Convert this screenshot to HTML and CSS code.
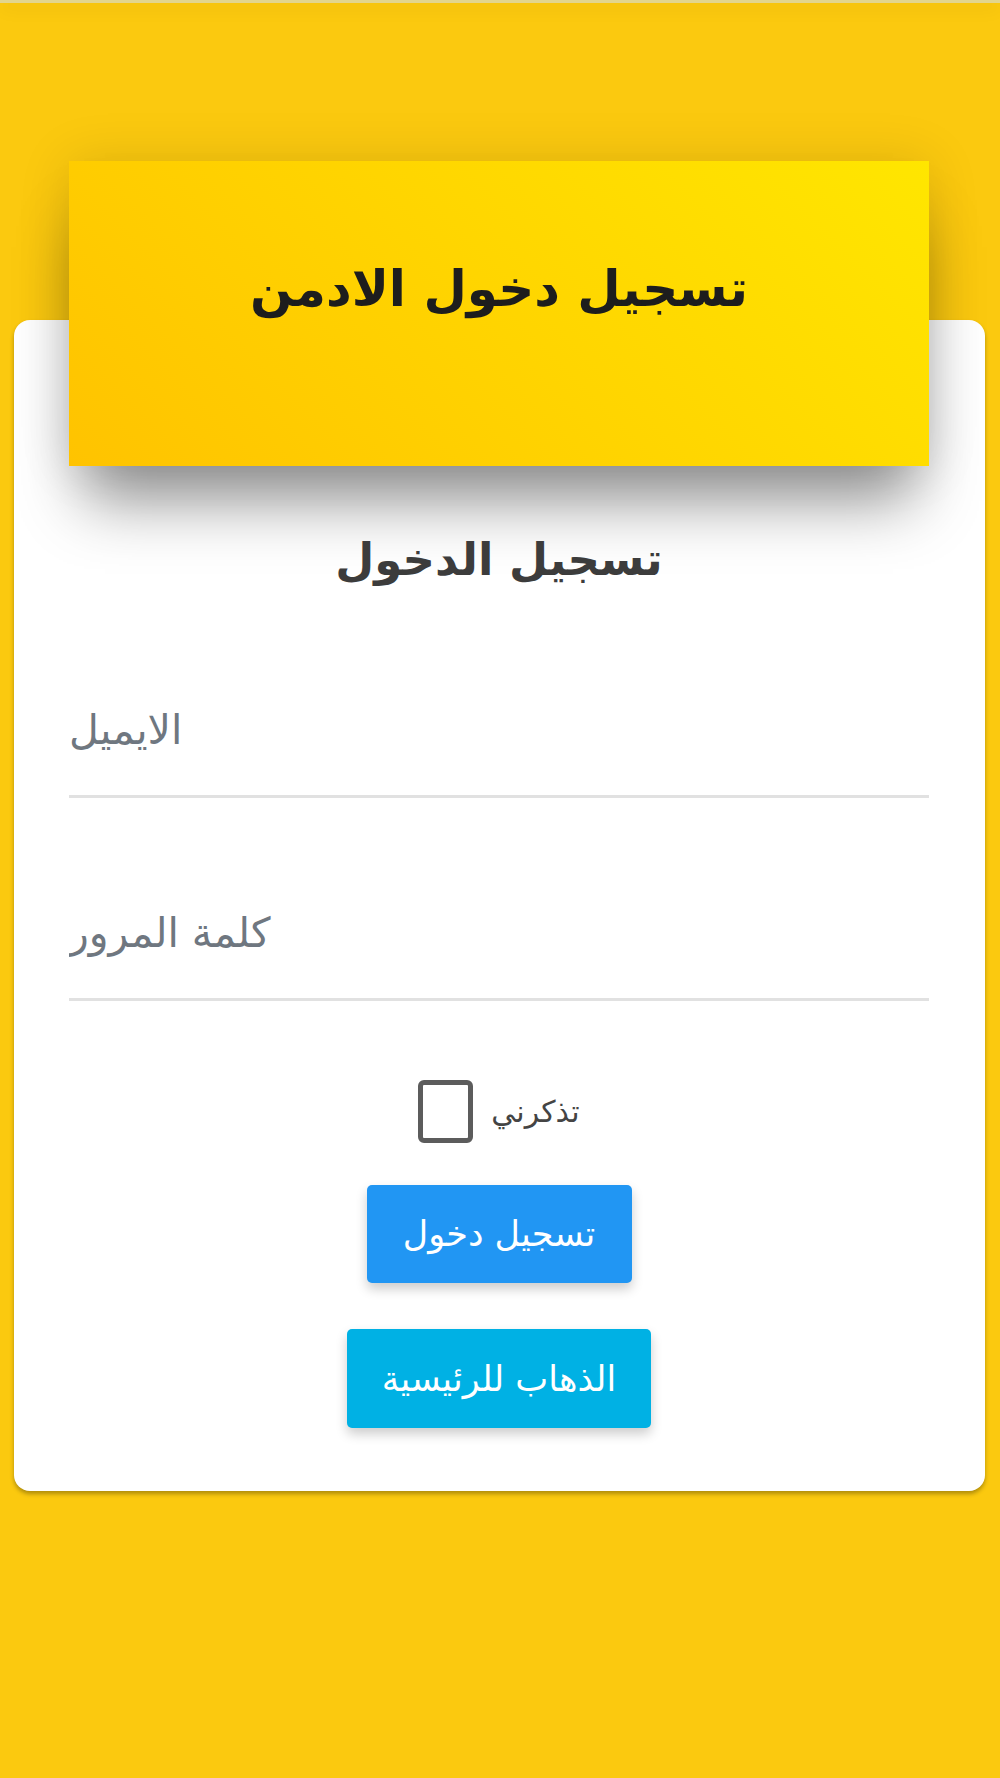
FILE: index.html
```html
<!DOCTYPE html>
<html lang="ar" dir="rtl">
<head>
    <meta charset="UTF-8">
    <meta name="viewport" content="width=device-width, initial-scale=1.0">
    <title>تسجيل دخول الادمن</title>
    <link rel="stylesheet" href="styles.css">
</head>
<body>
    <div class="topbar"></div>
    <div class="page">
        <div class="card">
            <div class="card-header">
                <h1>تسجيل دخول الادمن</h1>
            </div>
            <h2 class="card-title">تسجيل الدخول</h2>
            <form class="login-form" onsubmit="return false">
                <div class="field">
                    <input type="email" name="email" placeholder="الايميل">
                </div>
                <div class="field field-password">
                    <input type="password" name="password" placeholder="كلمة المرور">
                </div>
                <label class="remember">
                    <span>تذكرني</span>
                    <input type="checkbox" name="remember">
                </label>
                <button type="submit" class="btn btn-primary">تسجيل دخول</button>
                <button type="button" class="btn btn-info">الذهاب للرئيسية</button>
            </form>
        </div>
    </div>
</body>
</html>
```

FILE: styles.css
```css
body {
    margin: 0;
    min-height: 1778px;
    background: #fbc90f;
    font-family: 'DejaVu Sans', sans-serif;
    color: #3c3c3c;
}
.topbar {
    height: 3px;
    background: #e2d58e;
    box-shadow: 0 4px 18px rgba(0, 0, 0, 0.14);
    position: relative;
}
.page {
    padding: 317px 15px 0 14px;
}
.card {
    display: flow-root;
    background: #fff;
    border-radius: 16px;
    box-shadow: 0 3px 4px rgba(0, 0, 0, 0.3);
    padding: 0 56px 63px 55px;
}
.card-header {
    margin-top: -159px;
    height: 305px;
    box-sizing: border-box;
    padding-top: 98px;
    background: linear-gradient(45deg, #ffc300 0%, #ffe600 100%);
    box-shadow: 0 50px 60px -15px rgba(0, 0, 0, 0.42), 0 0 50px rgba(0, 0, 0, 0.12);
    text-align: center;
}
.card-header h1 {
    margin: 0;
    font-size: 50px;
    line-height: 60px;
    font-weight: bold;
    color: #1d1d1d;
}
.card-title {
    margin: 64px 0 0;
    font-size: 45px;
    line-height: 60px;
    font-weight: bold;
    text-align: center;
    color: #3c3c3c;
}
.login-form {
    display: flex;
    flex-direction: column;
    align-items: center;
}
.field {
    width: 100%;
    margin-top: 108px;
}
.field-password {
    margin-top: 103px;
}
.field input {
    display: block;
    width: 100%;
    height: 100px;
    box-sizing: border-box;
    padding: 0 0 34px;
    border: none;
    border-bottom: 3px solid #e1e1e1;
    outline: none;
    background: transparent;
    font-family: inherit;
    font-size: 41px;
    text-align: left;
    direction: rtl;
    color: #333;
}
.field input::placeholder {
    color: #6f7780;
}
.remember {
    display: flex;
    align-items: center;
    gap: 18px;
    margin-top: 79px;
    font-size: 30px;
    color: #444;
}
.remember input {
    appearance: none;
    -webkit-appearance: none;
    margin: 0;
    width: 55px;
    height: 63px;
    box-sizing: border-box;
    border: 5px solid #5c5c5c;
    border-radius: 6px;
    background: #fff;
}
.btn {
    display: block;
    height: 98px;
    border: none;
    border-radius: 5px;
    color: #fff;
    font-family: inherit;
    font-size: 35px;
    cursor: pointer;
    box-shadow: 0 6px 12px rgba(0, 0, 0, 0.2);
}
.btn-primary {
    width: 265px;
    margin-top: 42px;
    background: #2196f3;
}
.btn-info {
    width: 304px;
    height: 99px;
    margin-top: 46px;
    background: #00b1e4;
}
```
